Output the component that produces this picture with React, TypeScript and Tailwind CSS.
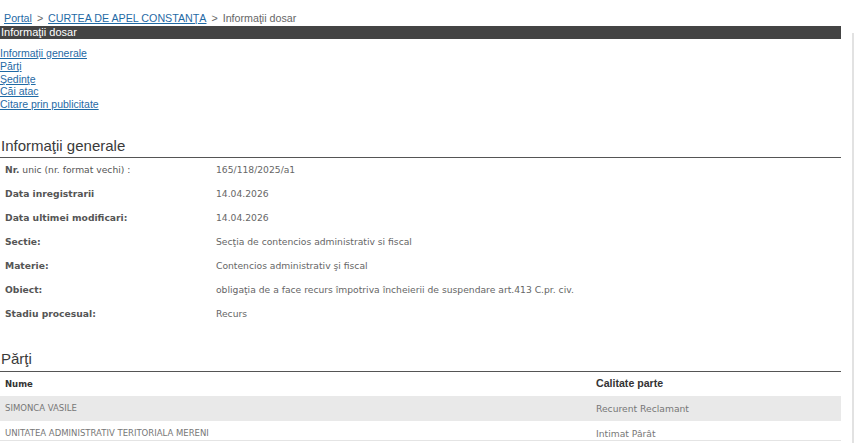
const links = ["Informaţii generale", "Părţi", "Şedinţe", "Căi atac", "Citare prin publicitate"];

const info: { label: React.ReactNode; value: string }[] = [
  {
    label: (
      <>
        <span className="font-bold">Nr.</span> unic (nr. format vechi) :
      </>
    ),
    value: "165/118/2025/a1",
  },
  { label: <span className="font-bold">Data inregistrarii</span>, value: "14.04.2026" },
  { label: <span className="font-bold">Data ultimei modificari:</span>, value: "14.04.2026" },
  { label: <span className="font-bold">Sectie:</span>, value: "Secţia de contencios administrativ si fiscal" },
  { label: <span className="font-bold">Materie:</span>, value: "Contencios administrativ şi fiscal" },
  {
    label: <span className="font-bold">Obiect:</span>,
    value: "obligaţia de a face recurs împotriva încheierii de suspendare art.413 C.pr. civ.",
  },
  { label: <span className="font-bold">Stadiu procesual:</span>, value: "Recurs" },
];

const parti = [
  { nume: "SIMONCA VASILE", calitate: "Recurent Reclamant" },
  { nume: "UNITATEA ADMINISTRATIV TERITORIALA MERENI", calitate: "Intimat Pârât" },
];

const arial = "font-['Liberation_Sans',Arial,sans-serif]";
const verdana = "font-['DejaVu_Sans',Verdana,sans-serif]";

export default function App() {
  return (
    <div className="flex w-[855px] h-[443px] overflow-hidden bg-white">
      <div className="w-[841px] flex flex-col">
        {/* Breadcrumb */}
        <div className={`${arial} text-[10.7px] leading-[15px] pt-[11px] pl-[4px] text-[#666]`}>
          <a href="#" className="text-[#1f6aa5] underline">Portal</a>
          <span className="px-[2px]"> &gt; </span>
          <a href="#" className="text-[#1f6aa5] underline">CURTEA DE APEL CONSTANŢA</a>
          <span className="px-[2px]"> &gt; </span>
          <span>Informaţii dosar</span>
        </div>

        <div className={`${arial} bg-[#444] text-white text-[11px] leading-[13px] h-[13px] pl-px`}>
          Informaţii dosar
        </div>

        <div className={`${arial} mt-[8px] flex flex-col text-[10.5px] leading-[12.8px]`}>
          {links.map((l) => (
            <a key={l} href="#" className="text-[#1f6aa5] underline w-fit">
              {l}
            </a>
          ))}
        </div>

        {/* Informatii generale */}
        <h2 className={`${arial} mt-[26px] text-[15px] leading-[18px] pb-[2px] pl-px text-[#3a3a3a] border-b border-[#555]`}>
          Informaţii generale
        </h2>
        <div className={`${verdana} text-[9.2px]`}>
          {info.map((r, i) => (
            <div key={i} className="flex items-center h-[24px]">
              <div className="w-[216px] pl-[5px] text-[#555]">{r.label}</div>
              <div className="text-[#666]">{r.value}</div>
            </div>
          ))}
        </div>

        {/* Parti */}
        <h2 className={`${arial} mt-[24px] text-[15px] leading-[18px] pb-[3px] pl-px text-[#3a3a3a] border-b border-[#555]`}>
          Părţi
        </h2>
        <div className="flex items-center h-[24px] text-[#333]">
          <div className={`${verdana} font-bold text-[8.5px] flex-1 pl-[5px]`}>Nume</div>
          <div className={`${arial} font-bold text-[10.6px] w-[245px]`}>Calitate parte</div>
        </div>
        {parti.map((p, i) => (
          <div
            key={p.nume}
            className={`${verdana} text-[#777] flex ${
              i === 0 ? "bg-[#e9e9e9] h-[25px] items-center" : "h-[20px] pt-[6px] border-b border-[#e4e4e4]"
            }`}
          >
            <div className="flex-1 pl-[5px] text-[8.5px]">{p.nume}</div>
            <div className="w-[245px] text-[9.2px]">{p.calitate}</div>
          </div>
        ))}
      </div>

      {/* scrollbar */}
      <div className="flex-1 flex justify-end pr-[1px] pt-[33px]">
        <div className="w-[2px] h-full bg-[#e2e2e2]" />
      </div>
    </div>
  );
}
